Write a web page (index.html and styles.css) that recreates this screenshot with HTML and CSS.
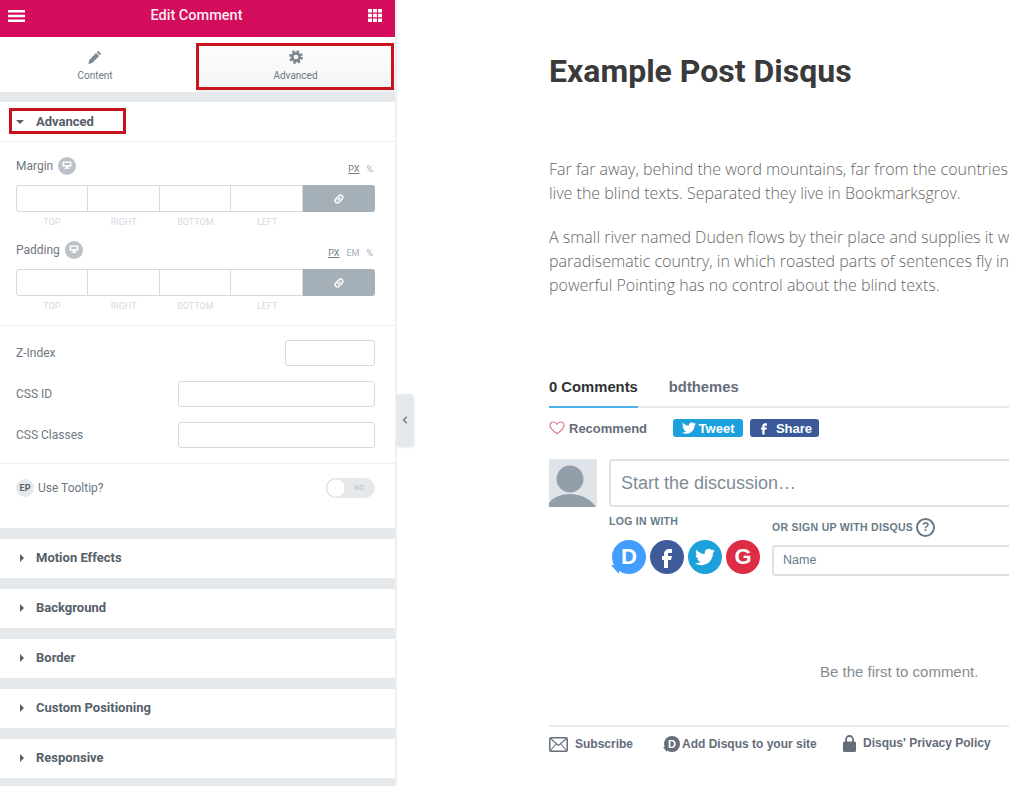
FILE: index.html
```html
<!DOCTYPE html>
<html lang="en">
<head>
    <meta charset="UTF-8">
    <meta name="viewport" content="width=device-width, initial-scale=1.0">
    <title>Edit Comment</title>
    <link rel="stylesheet" href="styles.css">
</head>
<body>
    <!-- Shared icons -->
    <svg class="icon-defs" width="0" height="0">
        <symbol id="i-link" viewBox="0 0 12 12">
            <path d="M5 7l2-2M4.600 4.200L6 2.800a2 2 0 0 1 3.200 3.200L7.800 7.400M7.400 7.800L6 9.200A2 2 0 0 1 2.800 6l1.400-1.400" fill="none" stroke="currentColor" stroke-width="1.500" stroke-linecap="round"/>
        </symbol>
        <symbol id="i-monitor" viewBox="0 0 16 16">
            <path d="M3 4h10v6H9.500v1.500h1.500v.7H5v-.7h1.500V10H3z" fill="#fff"/>
            <rect x="4.800" y="5.600" width="6.400" height="2.600" fill="#bcc1c9"/>
        </symbol>
        <symbol id="i-twitter" viewBox="0 0 24 24">
            <path d="M23.953 4.570a10 10 0 01-2.825.775 4.958 4.958 0 002.163-2.723c-.951.555-2.005.959-3.127 1.184a4.920 4.920 0 00-8.384 4.482C7.690 8.095 4.067 6.130 1.640 3.162a4.822 4.822 0 00-.666 2.475c0 1.710.870 3.213 2.188 4.096a4.904 4.904 0 01-2.228-.616v.060a4.923 4.923 0 003.946 4.827 4.996 4.996 0 01-2.212.085 4.936 4.936 0 004.604 3.417 9.867 9.867 0 01-6.102 2.105c-.390 0-.779-.023-1.170-.067a13.995 13.995 0 007.557 2.209c9.053 0 13.998-7.496 13.998-13.985 0-.210 0-.420-.015-.630A9.935 9.935 0 0024 4.590z" fill="currentColor"/>
        </symbol>
        <symbol id="i-facebook" viewBox="0 0 24 24">
            <path d="M14 8h3V4h-3c-2.800 0-5 2.200-5 5v2H7v4h2v8h4v-8h3l1-4h-4V9c0-.6.4-1 1-1z" fill="currentColor"/>
        </symbol>
    </svg>

    <div class="app">
        <!-- Elementor panel -->
        <aside class="panel">
            <header class="panel-head">
                <svg class="head-icon" width="17" height="12" viewBox="0 0 17 12"><path d="M0 0h17v2.400H0zM0 4.800h17v2.400H0zM0 9.600h17V12H0z" fill="#fff"/></svg>
                <span class="panel-title">Edit Comment</span>
                <svg class="head-icon" width="14" height="13" viewBox="0 0 14 13"><path d="M0 0h4v3.600H0zM5 0h4v3.600H5zM10 0h4v3.600h-4zM0 4.700h4v3.600H0zM5 4.700h4v3.600H5zM10 4.700h4v3.600h-4zM0 9.400h4V13H0zM5 9.400h4V13H5zM10 9.400h4V13h-4z" fill="#fff"/></svg>
            </header>

            <nav class="tabs">
                <div class="tab tab-first">
                    <svg width="14" height="14" viewBox="0 0 15 15"><path d="M10.800.8l3.400 3.400-1.500 1.500-3.400-3.400zM8.500 3.100l3.400 3.400-7.500 7.500-4 .9.900-4z" fill="#7d8790"/></svg>
                    <span>Content</span>
                </div>
                <div class="tab tab-active">
                    <svg width="14" height="14" viewBox="0 0 15 15"><circle cx="7.500" cy="7.500" r="4" fill="none" stroke="#7d8790" stroke-width="3"/><circle cx="7.500" cy="7.500" r="6.200" fill="none" stroke="#7d8790" stroke-width="2.400" stroke-dasharray="2.600 2.270"/></svg>
                    <span>Advanced</span>
                    <div class="red-box"></div>
                </div>
            </nav>

            <section class="group">
                <div class="group-title group-open">
                    <i class="caret-down"></i>Advanced
                    <div class="red-box red-box-title"></div>
                </div>

                <div class="dim-block">
                    <div class="dim-label">
                        <span>Margin</span>
                        <svg class="device" width="18" height="18"><circle cx="9" cy="9" r="9" fill="#bcc1c9"/><use href="#i-monitor" x="2" y="1" width="14" height="14"/></svg>
                        <div class="units"><u>PX</u><span>%</span></div>
                    </div>
                    <div class="dims">
                        <div class="dim-cell"></div><div class="dim-cell"></div><div class="dim-cell"></div><div class="dim-cell"></div>
                        <div class="dim-link"><svg width="12" height="12"><use href="#i-link"/></svg></div>
                    </div>
                    <div class="dim-names"><span>TOP</span><span>RIGHT</span><span>BOTTOM</span><span>LEFT</span></div>
                </div>

                <div class="dim-block dim-block-second">
                    <div class="dim-label">
                        <span>Padding</span>
                        <svg class="device" width="18" height="18"><circle cx="9" cy="9" r="9" fill="#bcc1c9"/><use href="#i-monitor" x="2" y="1" width="14" height="14"/></svg>
                        <div class="units"><u>PX</u><span>EM</span><span>%</span></div>
                    </div>
                    <div class="dims">
                        <div class="dim-cell"></div><div class="dim-cell"></div><div class="dim-cell"></div><div class="dim-cell"></div>
                        <div class="dim-link"><svg width="12" height="12"><use href="#i-link"/></svg></div>
                    </div>
                    <div class="dim-names"><span>TOP</span><span>RIGHT</span><span>BOTTOM</span><span>LEFT</span></div>
                </div>

                <div class="fields">
                    <div class="field"><label>Z-Index</label><div class="input input-small"></div></div>
                    <div class="field"><label>CSS ID</label><div class="input"></div></div>
                    <div class="field"><label>CSS Classes</label><div class="input"></div></div>
                </div>

                <div class="tooltip-row">
                    <span class="ep-badge">EP</span>
                    <label>Use Tooltip?</label>
                    <div class="switch"><i class="knob"></i><span>NO</span></div>
                </div>
            </section>

            <section class="group group-closed"><div class="group-title"><i class="caret-right"></i>Motion Effects</div></section>
            <section class="group group-closed"><div class="group-title"><i class="caret-right"></i>Background</div></section>
            <section class="group group-closed"><div class="group-title"><i class="caret-right"></i>Border</div></section>
            <section class="group group-closed"><div class="group-title"><i class="caret-right"></i>Custom Positioning</div></section>
            <section class="group group-closed"><div class="group-title"><i class="caret-right"></i>Responsive</div></section>
        </aside>

        <!-- Panel collapse handle -->
        <div class="collapse">
            <svg width="6" height="8" viewBox="0 0 6 8"><path d="M4.800.8L1.500 4l3.300 3.200" fill="none" stroke="#6d7882" stroke-width="1.400"/></svg>
        </div>

        <!-- Page preview -->
        <main class="preview">
            <h1 class="post-title">Example Post Disqus</h1>
            <div class="post-body">
                <p>Far far away, behind the word mountains, far from the countries<br>live the blind texts. Separated they live in Bookmarksgrov.</p>
                <p>A small river named Duden flows by their place and supplies it w<br>paradisematic country, in which roasted parts of sentences fly in<br>powerful Pointing has no control about the blind texts.</p>
            </div>

            <div class="disqus">
                <div class="dq-tabs">
                    <span class="dq-tab dq-tab-active">0 Comments</span>
                    <span class="dq-tab">bdthemes</span>
                </div>

                <div class="dq-actions">
                    <svg class="dq-heart" width="16" height="14" viewBox="0 0 16 14"><path d="M8 12.800C3 9 1 7 1 4.400 1 2.500 2.500 1 4.300 1 5.800 1 7.200 1.900 8 3.300 8.800 1.900 10.200 1 11.700 1 13.500 1 15 2.500 15 4.400 15 7 13 9 8 12.800z" fill="none" stroke="#d9798f" stroke-width="1.200"/></svg>
                    <span class="dq-recommend">Recommend</span>
                    <span class="dq-share dq-tweet"><svg width="14" height="14"><use href="#i-twitter"/></svg>Tweet</span>
                    <span class="dq-share dq-fb"><svg width="14" height="14"><use href="#i-facebook"/></svg>Share</span>
                </div>

                <div class="dq-compose">
                    <svg class="dq-avatar" width="48" height="48" viewBox="0 0 48 48">
                        <rect width="48" height="48" rx="2" fill="#dfe4e8"/>
                        <circle cx="21" cy="20" r="13.500" fill="#929fab"/>
                        <path d="M0 48v-4c4-6 13-9 21-9s19 3 26 13z" fill="#929fab"/>
                    </svg>
                    <div class="dq-main">
                        <div class="dq-box">Start the discussion…</div>
                        <div class="dq-auth">
                            <div class="dq-login">
                                <div class="dq-caption">LOG IN WITH</div>
                                <div class="dq-socials">
                                    <span class="social social-d">D</span>
                                    <span class="social social-f"><svg width="24" height="24"><use href="#i-facebook"/></svg></span>
                                    <span class="social social-t"><svg width="20" height="20"><use href="#i-twitter"/></svg></span>
                                    <span class="social social-g">G</span>
                                </div>
                            </div>
                            <div class="dq-signup">
                                <div class="dq-caption">OR SIGN UP WITH DISQUS <span class="dq-help">?</span></div>
                                <div class="dq-name">Name</div>
                            </div>
                        </div>
                    </div>
                </div>

                <p class="dq-empty">Be the first to comment.</p>

                <footer class="dq-footer">
                    <span class="dq-link dq-link-sub">
                        <svg width="19" height="15" viewBox="0 0 19 15"><rect x=".8" y=".8" width="17.400" height="13.400" rx="1" fill="none" stroke="#656c7a" stroke-width="1.500"/><path d="M1.500 1.500l8 7 8-7M1.500 13.500l5.500-6.500M17.500 13.500l-5.500-6.500" fill="none" stroke="#656c7a" stroke-width="1.100"/></svg>
                        Subscribe
                    </span>
                    <span class="dq-link dq-link-add"><i class="dq-mini-d">D</i>Add Disqus to your site</span>
                    <span class="dq-link dq-link-lock">
                        <svg width="13" height="17" viewBox="0 0 13 17"><path d="M3 7V4.500a3.500 3.500 0 0 1 7 0V7" fill="none" stroke="#656c7a" stroke-width="1.800"/><rect y="6.500" width="13" height="10.500" rx="1.500" fill="#656c7a"/></svg>
                        Disqus' Privacy Policy
                    </span>
                </footer>
            </div>
        </main>
    </div>
</body>
</html>
```

FILE: styles.css
```css
html, body {
    margin: 0;
    padding: 0;
    height: 100%;
    overflow: hidden;
    background-color: #fff;
}

body {
    font-family: Roboto, "Liberation Sans", sans-serif;
}

.icon-defs {
    position: absolute;
}

.app {
    position: relative;
    display: flex;
    height: 786px;
    overflow: hidden;
}

/* Panel */
.panel {
    flex: 0 0 395px;
    width: 395px;
    height: 786px;
    overflow: hidden;
    background-color: #e6e9ec;
    border-right: 2px solid #eef0f2;
}

.panel-head {
    display: flex;
    justify-content: space-between;
    align-items: center;
    height: 37px;
    padding: 0 13px 6px 8px;
    box-sizing: border-box;
    background-color: #d30c5c;
}

.panel-title {
    color: #fff;
    font-size: 14.500px;
    font-weight: 500;
    opacity: 0.92;
}

.head-icon {
    display: block;
}

.tabs {
    display: flex;
    height: 55px;
    background-color: #fff;
}

.tab {
    position: relative;
    flex: 1;
    display: flex;
    flex-direction: column;
    align-items: center;
    padding-top: 13px;
    box-sizing: border-box;
    font-size: 10px;
    color: #6d7882;
}

.tab-first {
    flex: 0 0 196px;
    padding-right: 6px;
}

.tab span {
    margin-top: 6px;
}

.tab-active {
    background: linear-gradient(#fff, #f1f3f5);
}

.red-box {
    position: absolute;
    left: 0;
    right: 1px;
    top: 6px;
    bottom: 2px;
    border: 3px solid #c9141d;
    pointer-events: none;
}

.red-box-title {
    left: 9px;
    right: auto;
    width: 111px;
    top: 6px;
    bottom: auto;
    height: 20px;
}

.group {
    margin-top: 10px;
    background-color: #fff;
}

.group-title {
    position: relative;
    display: flex;
    align-items: center;
    height: 39px;
    padding-left: 20px;
    padding-bottom: 2px;
    box-sizing: border-box;
    font-size: 13px;
    font-weight: 700;
    color: #556068;
}

.group-open {
    height: 40px;
    padding-bottom: 0;
    border-bottom: 1px solid #eceef0;
}

.group-closed {
    margin-top: 11px;
}

.group-closed:first-of-type {
    margin-top: 10px;
}

.caret-down {
    width: 0;
    height: 0;
    margin-left: -4px;
    margin-right: 12px;
    border-left: 4px solid transparent;
    border-right: 4px solid transparent;
    border-top: 4px solid #556068;
}

.caret-right {
    width: 0;
    height: 0;
    margin-right: 12px;
    border-top: 4px solid transparent;
    border-bottom: 4px solid transparent;
    border-left: 4px solid #556068;
}

/* Margin / padding controls */
.dim-block {
    padding: 15px 20px 0 16px;
}

.dim-block-second {
    padding-top: 13px;
    padding-bottom: 13px;
    border-bottom: 1px solid #eceef0;
}

.dim-label {
    display: flex;
    align-items: center;
    height: 18px;
    margin-bottom: 10px;
    font-size: 12px;
    color: #6d7882;
}

.device {
    margin-left: 5px;
}

.units {
    margin-left: auto;
    margin-top: 5px;
    display: flex;
    gap: 7px;
    padding-right: 2px;
    font-size: 9px;
    color: #a4afb7;
}

.units u {
    color: #6d7882;
}

.dims {
    display: flex;
    height: 27px;
}

.dim-cell {
    flex: 0 0 71.750px;
    box-sizing: border-box;
    border: 1px solid #d5dadf;
    border-left-width: 0;
}

.dim-cell:first-child {
    border-left-width: 1px;
    border-radius: 3px 0 0 3px;
}

.dim-link {
    flex: 1;
    display: flex;
    justify-content: center;
    align-items: center;
    color: #fff;
    background-color: #a4afb7;
    border-radius: 0 3px 3px 0;
}

.dim-names {
    display: flex;
    margin-top: 4px;
    font-size: 9px;
    line-height: 12px;
    color: #d5dadf;
}

.dim-names span {
    flex: 0 0 71.750px;
    text-align: center;
}

.fields {
    padding: 14px 20px 15px 16px;
    border-bottom: 1px solid #eceef0;
}

.field {
    display: flex;
    justify-content: space-between;
    align-items: center;
    margin-bottom: 15px;
    font-size: 12px;
    color: #6d7882;
}

.field:last-child {
    margin-bottom: 0;
}

.input {
    width: 197px;
    height: 26px;
    box-sizing: border-box;
    border: 1px solid #d5dadf;
    border-radius: 3px;
}

.input-small {
    width: 90px;
}

.tooltip-row {
    display: flex;
    align-items: center;
    height: 64px;
    padding: 0 20px 16px 16px;
    box-sizing: border-box;
    font-size: 12px;
    color: #6d7882;
}

.ep-badge {
    display: flex;
    justify-content: center;
    align-items: center;
    width: 18px;
    height: 18px;
    margin-right: 4px;
    border-radius: 50%;
    background-color: #e6e9ec;
    color: #556068;
    font-size: 9px;
    font-weight: 700;
}

.switch {
    position: relative;
    display: flex;
    justify-content: flex-end;
    align-items: center;
    width: 49px;
    height: 20px;
    margin-left: auto;
    padding-right: 11px;
    box-sizing: border-box;
    border-radius: 10px;
    background-color: #e6e9ec;
    font-size: 7px;
    color: #b5bcc2;
}

.knob {
    position: absolute;
    left: 0;
    top: 0;
    width: 18px;
    height: 18px;
    border: 1px solid #d5dadf;
    border-radius: 50%;
    background-color: #fff;
}

/* Handle over the panel edge */
.collapse {
    position: absolute;
    left: 397px;
    top: 394px;
    display: flex;
    justify-content: center;
    align-items: center;
    width: 16px;
    height: 52px;
    background-color: #e6e9ec;
    border-radius: 0 3px 3px 0;
    box-shadow: 1px 1px 3px rgba(0, 0, 0, 0.12);
}

/* Preview */
.preview {
    flex: 0 0 auto;
    width: 640px;
    padding-left: 152px;
    color: #333;
}

.post-title {
    margin: 50px 0 0;
    font-size: 32px;
    line-height: 42px;
    font-weight: 700;
    color: #3a3a3a;
}

.post-body {
    margin-top: 65px;
    font-family: "Open Sans", sans-serif;
    font-size: 16px;
    font-weight: 300;
    line-height: 24px;
    color: #666;
    white-space: nowrap;
}

.post-body p {
    margin: 0 0 20px;
}

.disqus {
    margin-top: 74px;
    font-family: "Liberation Sans", Arial, sans-serif;
    color: #656c7a;
}

.dq-tabs {
    display: flex;
    gap: 31px;
    height: 37px;
    box-sizing: border-box;
    border-bottom: 2px solid #e7e9ee;
    font-size: 14.800px;
    font-weight: 700;
}

.dq-tab {
    height: 37px;
    line-height: 32px;
    box-sizing: border-box;
}

.dq-tab-active {
    color: #2f3333;
    border-bottom: 2px solid #4fb3e8;
}

.dq-actions {
    display: flex;
    align-items: center;
    height: 18px;
    margin-top: 11px;
}

.dq-recommend {
    margin-left: 4px;
    margin-right: 26px;
    font-size: 13px;
    font-weight: 700;
}

.dq-share {
    display: flex;
    align-items: center;
    justify-content: center;
    gap: 3px;
    height: 18px;
    border-radius: 3px;
    color: #fff;
    font-size: 13px;
    font-weight: 700;
}

.dq-tweet {
    width: 70px;
    margin-right: 7px;
    background-color: #1da1dc;
}

.dq-fb {
    width: 69px;
    background-color: #3b5998;
    gap: 5px;
}

.dq-compose {
    display: flex;
    gap: 12px;
    margin-top: 22px;
}

.dq-avatar {
    flex: 0 0 auto;
}

.dq-main {
    flex: 1;
}

.dq-box {
    width: 600px;
    height: 48px;
    box-sizing: border-box;
    padding-left: 10px;
    border: 2px solid #dde0e4;
    border-radius: 4px;
    font-size: 18px;
    line-height: 44px;
    color: #7f8c96;
}

.dq-auth {
    display: flex;
    gap: 12px;
    margin-top: 7px;
}

.dq-caption {
    font-size: 10.500px;
    font-weight: 700;
    line-height: 14px;
    letter-spacing: 0.3px;
    color: #687a86;
}

.dq-socials {
    display: flex;
    gap: 4px;
    margin-top: 12px;
    margin-left: 3px;
}

.social {
    display: flex;
    justify-content: center;
    align-items: center;
    width: 34px;
    height: 34px;
    border-radius: 50%;
    color: #fff;
    font-weight: 700;
    font-size: 22px;
}

.social-d {
    position: relative;
    background-color: #419eff;
}

.social-d::after {
    content: "";
    position: absolute;
    left: -1px;
    bottom: 0;
    width: 0;
    height: 0;
    border-top: 9px solid #419eff;
    border-left: 8px solid transparent;
}

.social-f {
    background-color: #3f5b9a;
}

.social-t {
    background-color: #1da1dc;
}

.social-g {
    background-color: #dd2c44;
}

.dq-signup {
    padding-top: 6px;
}

.dq-help {
    display: inline-block;
    width: 19px;
    height: 19px;
    margin: -3px 0 -2px 0;
    box-sizing: border-box;
    border: 2px solid #687a86;
    border-radius: 50%;
    font-size: 12px;
    line-height: 15px;
    text-align: center;
    vertical-align: middle;
}

.dq-name {
    width: 300px;
    height: 31px;
    margin-top: 10px;
    box-sizing: border-box;
    padding-left: 9px;
    border: 2px solid #dde0e4;
    border-radius: 4px;
    font-size: 12.500px;
    line-height: 27px;
    color: #687a86;
}

.dq-empty {
    margin: 87px 0 0 271px;
    font-size: 15px;
    line-height: 18px;
    color: #858c93;
}

.dq-footer {
    display: flex;
    align-items: center;
    height: 34px;
    margin-top: 44px;
    border-top: 2px solid #e7e9ee;
    font-size: 12px;
    font-weight: 700;
}

.dq-link {
    display: flex;
    align-items: center;
}

.dq-link-sub {
    gap: 7px;
    width: 115px;
}

.dq-link-add {
    gap: 2px;
    width: 179px;
}

.dq-link-lock {
    gap: 7px;
    margin-top: -2px;
}

.dq-mini-d {
    position: relative;
    display: flex;
    justify-content: center;
    align-items: center;
    width: 16px;
    height: 16px;
    border-radius: 50%;
    background-color: #656c7a;
    color: #fff;
    font-size: 11px;
    font-style: normal;
}

.dq-mini-d::after {
    content: "";
    position: absolute;
    left: -1px;
    bottom: 0;
    border-top: 5px solid #656c7a;
    border-left: 4px solid transparent;
}
```
